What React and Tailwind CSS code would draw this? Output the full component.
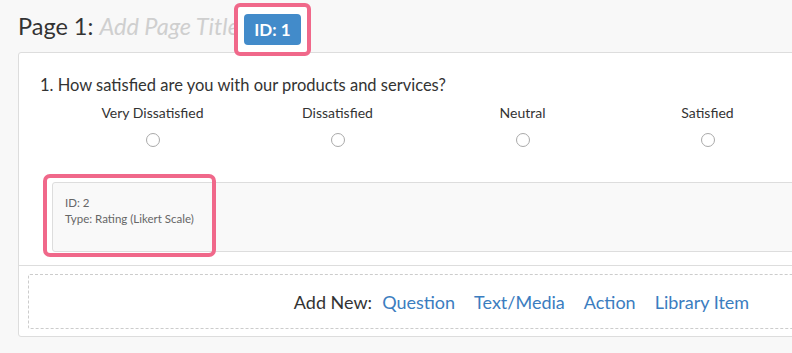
import React from "react";

const choices = ["Very Dissatisfied", "Dissatisfied", "Neutral", "Satisfied"];

export default function App() {
  return (
    <div className="relative w-[792px] h-[353px] overflow-hidden bg-[#f8f8f8] font-['Lato','Liberation_Sans',sans-serif] text-[#333]">
      <div className="pl-[18px] pt-[11px]">
        <h1 className="text-[23.5px] leading-[30px] font-normal text-[#333] whitespace-nowrap">
          Page 1: <span className="italic text-[#cfcfcf]">Add Page Title</span>
        </h1>
        <div className="mt-[11px] w-[1007px] bg-white border border-[#dddddd] rounded-[3px]">
          <div className="pt-[22px] pl-[21px]">
            <p className="text-[16.5px] leading-[20px] text-[#333]">1. How satisfied are you with our products and services?</p>
          </div>
          <div className="mt-[10px] ml-[41px] grid grid-cols-[repeat(4,185px)]">
            {choices.map((c) => (
              <div key={c} className="flex flex-col items-center">
                <span className="text-[14px] leading-[16px] text-[#333] whitespace-nowrap">{c}</span>
                <span className="mt-[12px] w-[14px] h-[14px] rounded-full border border-[#a9a9a9] bg-white"></span>
              </div>
            ))}
          </div>
          <div className="mt-[35px] ml-[33px] mr-[33px] h-[70px] border border-[#dddddd] rounded-[3px] bg-[#f9f9f9] px-[12px] pt-[12px]">
            <div className="text-[11.5px] leading-[16px] text-[#666]">ID: 2</div>
            <div className="text-[11.5px] leading-[16px] text-[#666]">Type: Rating (Likert Scale)</div>
          </div>
          <div className="mt-[13px] border-t border-[#dddddd] px-[9px] pt-[8px] pb-[7px]">
            <div className="h-[55px] border border-dashed border-[#cccccc] rounded-[2px] flex items-center justify-center text-[18px] leading-[22px]">
              <span className="text-[#333] mr-[10px]">Add New:</span>
              <div className="flex gap-[19px] text-[#3b7dc0]">
                <span>Question</span>
                <span>Text/Media</span>
                <span>Action</span>
                <span>Library Item</span>
              </div>
            </div>
          </div>
        </div>
      </div>

      <div className="absolute left-[234px] top-[3px] w-[77px] h-[53px] border-[4px] border-[#f0688a] rounded-[6px] bg-white pl-[6px] pt-[7px]">
        <div className="w-[57px] h-[31px] rounded-[4px] bg-[#428bca] flex items-center justify-center text-white font-bold text-[17px] leading-none">
          ID: 1
        </div>
      </div>
      <div className="absolute left-[43px] top-[174px] w-[173px] h-[83px] border-[4px] border-[#f0688a] rounded-[7px] pointer-events-none"></div>
    </div>
  );
}
